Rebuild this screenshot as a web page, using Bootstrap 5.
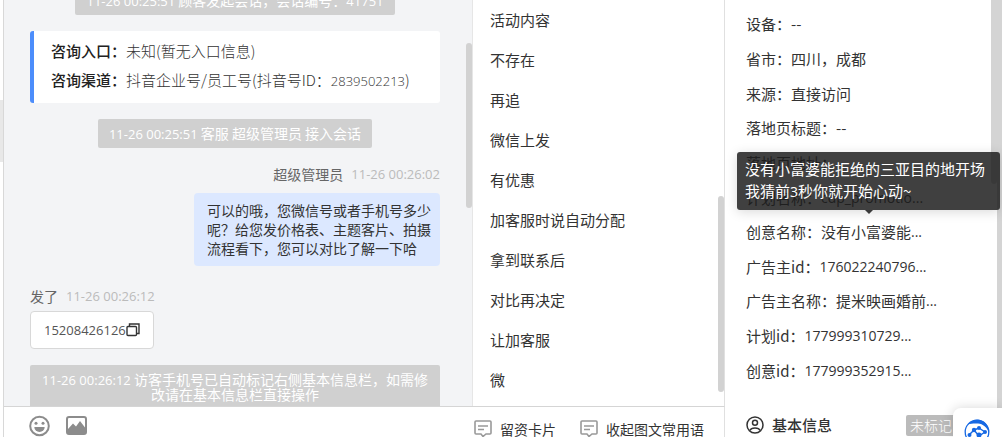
<!DOCTYPE html>
<html lang="zh-CN">
<head>
<meta charset="utf-8">
<meta name="viewport" content="width=device-width, initial-scale=1">
<title>客服会话</title>
<link href="https://cdn.jsdelivr.net/npm/bootstrap@5.3.0/dist/css/bootstrap.min.css" rel="stylesheet">
<style>
body{font-family:"Noto Sans CJK SC",sans-serif;font-size:15px;line-height:22px;color:#333;background:#fff}
.num{font-family:"Open Sans","Noto Sans CJK SC",sans-serif;font-size:14px}
.num-sm{font-family:"Open Sans","Noto Sans CJK SC",sans-serif;font-size:13px}
.edge{width:4px;border-right:1px solid #d8d8d8;padding-top:100px}
.edge-mark{height:62px;background:#e8e8e8}
.chat{background:#f3f4f6;padding:0 32px 0 26px;min-width:0}
.thumb{position:absolute;width:6px;border-radius:3px;background:#d2d2d2}
.chat .thumb{right:0;top:43px;height:165px}
.phrases .thumb{right:0;top:196px;height:196px}
.notice{background:#d0d0d0;color:#fff;font-size:14px;line-height:15px;padding:7px 11px;border-radius:2px;text-align:center}
.notice .num-sm{line-height:1}
.notice-first{margin-top:-14px}
.entry{background:#fff;border-left:4px solid #4c8dfb;border-radius:3px;padding:5px 17px;height:72px;line-height:29px;font-weight:300;color:#333}
.entry dt{font-weight:500;color:#222}
.who{font-size:14px;line-height:21px;color:#666}
.who time{color:#bbb}
.bubble{font-size:14px;line-height:19px;background:#dce8ff;border-radius:4px;padding:8px 9px 8px 13px;width:246px;color:#333}
.phone{height:38px;background:#fff;border:1px solid #d8d8d8;border-radius:4px;padding:0 13px;color:#555}
.plain{background:none;border:0;padding:0;color:inherit;line-height:20px}
.phrases{width:253px;border-left:1px solid #e6e6e6;border-right:1px solid #e0e0e0}
.phrase{height:40px;padding:0 0 0 17px;text-align:left}
.tools{height:31px;border-top:1px solid #d5d5d5;border-right:1px solid #e0e0e0;font-size:14px;padding-left:25px}
.tool-links{width:250px;padding-top:13px}
.info{width:277px;padding:7px 0 0 21px}
.info-bar{height:49px;padding-bottom:1px}
.bar-outer{position:absolute;right:0;top:0;bottom:0;width:5px;background:#d4d4d4}
.bar-inner{position:absolute;right:5px;top:0;width:6px;height:184px;border-radius:0 0 3px 3px;background:#d4d4d4}
.tip{position:absolute;right:2px;top:152px;width:263px;padding:6px 8px 7px;background:rgba(28,28,28,.84);color:#fff;border-radius:3px;box-shadow:0 2px 12px rgba(0,0,0,.15)}
.tip::after{content:"";position:absolute;left:128px;top:100%;border:4px solid transparent;border-top-color:#3a3a3a;border-bottom:0}
.tag{background:#bbb;color:#fff;font-size:14px;line-height:21px;padding:0 4px;border-radius:2px;font-weight:300;margin-right:46px}
.helper{position:absolute;right:0;bottom:0;width:49px;height:29px;background:#fff;border:0;border-radius:8px 0 0 0;box-shadow:0 0 12px rgba(0,0,0,.16);padding:11px 0 0 11px;overflow:hidden;text-align:left}
svg{display:block;flex:none}
</style>
</head>
<body class="vh-100 overflow-hidden d-flex">
<div class="edge flex-shrink-0"><div class="edge-mark"></div></div>
<main class="flex-fill d-flex flex-column overflow-hidden">
  <div class="d-flex flex-fill overflow-hidden">
    <section class="chat flex-fill position-relative overflow-hidden d-flex flex-column">
      <div class="notice notice-first align-self-center flex-shrink-0"><span class="num-sm">11-26 00:25:51</span> 顾客发起会话，会话编号：<span class="num-sm">41751</span></div>
      <dl class="entry mt-3 mb-3 flex-shrink-0">
        <div class="d-flex"><dt>咨询入口：</dt><dd class="m-0">未知(暂无入口信息)</dd></div>
        <div class="d-flex"><dt>咨询渠道：</dt><dd class="m-0 text-nowrap">抖音企业号/员工号(抖音号ID：<span class="num-sm">2839502213</span>)</dd></div>
      </dl>
      <div class="notice align-self-center flex-shrink-0"><span class="num-sm">11-26 00:25:51</span> 客服 超级管理员 接入会话</div>
      <div class="who d-flex justify-content-end gap-2 mt-3"><span>超级管理员</span><time class="num-sm">11-26 00:26:02</time></div>
      <div class="bubble align-self-end mt-2 flex-shrink-0">可以的哦，您微信号或者手机号多少呢？给您发价格表、主题客片、拍摄流程看下，您可以对比了解一下哈</div>
      <div class="who d-flex gap-2 mt-3 pt-1"><span>发了</span><time class="num-sm">11-26 00:26:12</time></div>
      <div class="phone num-sm d-flex align-items-center align-self-start mt-1 flex-shrink-0">15208426126
        <button class="plain" type="button" aria-label="复制"><svg width="14" height="14" viewBox="0 0 14 14" fill="none" stroke="#333" stroke-width="1.4"><rect x="1" y="3.5" width="9.5" height="9" rx="1"/><path d="M3.5 3V1H13v9.5h-2"/></svg></button>
      </div>
      <div class="notice mt-3 pb-3 flex-shrink-0"><span class="num-sm">11-26 00:26:12</span> 访客手机号已自动标记右侧基本信息栏，如需修改请在基本信息栏直接操作</div>
      <div class="thumb"></div>
    </section>
    <section class="phrases flex-shrink-0 position-relative d-flex flex-column overflow-hidden">
      <button class="plain phrase" type="button">活动内容</button>
      <button class="plain phrase" type="button">不存在</button>
      <button class="plain phrase" type="button">再追</button>
      <button class="plain phrase" type="button">微信上发</button>
      <button class="plain phrase" type="button">有优惠</button>
      <button class="plain phrase" type="button">加客服时说自动分配</button>
      <button class="plain phrase" type="button">拿到联系后</button>
      <button class="plain phrase" type="button">对比再决定</button>
      <button class="plain phrase" type="button">让加客服</button>
      <button class="plain phrase" type="button">微</button>
      <div class="thumb"></div>
    </section>
  </div>
  <footer class="tools flex-shrink-0 d-flex justify-content-between">
    <div class="d-flex gap-3 pt-2">
      <button class="plain" type="button" aria-label="表情"><svg width="21" height="22" viewBox="0 0 21 22"><circle cx="10.5" cy="11" r="9.3" fill="none" stroke="#8c8c8c" stroke-width="2"/><circle cx="7" cy="8.3" r="1.5" fill="#8c8c8c"/><circle cx="14" cy="8.3" r="1.5" fill="#8c8c8c"/><path d="M5.3 12h10.4a5.2 5 0 0 1-10.4 0z" fill="#8c8c8c"/></svg></button>
      <button class="plain" type="button" aria-label="图片"><svg width="21" height="22" viewBox="0 0 21 22"><rect x="1" y="2" width="19" height="17" rx="2" fill="none" stroke="#8c8c8c" stroke-width="2"/><path d="M2 14l5-5.5 3 3L14 6l5 6.500V19H2z" fill="#8c8c8c"/></svg></button>
    </div>
    <div class="tool-links d-flex gap-4">
      <button class="plain d-flex align-items-center gap-2" type="button"><svg width="18" height="18" viewBox="0 0 18 18" fill="none" stroke="#999" stroke-width="1.600"><path d="M2 1h14a1 1 0 0 1 1 1v11a1 1 0 0 1-1 1h-4l-3 2.500-2-2.500H2a1 1 0 0 1-1-1V2a1 1 0 0 1 1-1zM4 6h10M4 9.500h6"/></svg>留资卡片</button>
      <button class="plain d-flex align-items-center gap-2" type="button"><svg width="18" height="18" viewBox="0 0 18 18" fill="none" stroke="#999" stroke-width="1.600"><path d="M2 1h14a1 1 0 0 1 1 1v11a1 1 0 0 1-1 1h-4l-3 2.500-2-2.500H2a1 1 0 0 1-1-1V2a1 1 0 0 1 1-1zM4 6h10M4 9.500h6"/></svg>收起图文常用语</button>
    </div>
  </footer>
</main>
<aside class="info flex-shrink-0 position-relative d-flex flex-column">
  <div class="flex-fill d-flex flex-column">
    <div class="flex-fill d-flex align-items-center">设备：--</div>
    <div class="flex-fill d-flex align-items-center">省市：四川，成都</div>
    <div class="flex-fill d-flex align-items-center">来源：直接访问</div>
    <div class="flex-fill d-flex align-items-center">落地页标题：--</div>
    <div class="flex-fill d-flex align-items-center">落地页地址：</div>
    <div class="flex-fill d-flex align-items-center">计划名称：<span class="num">cdp_promotio...</span></div>
    <div class="flex-fill d-flex align-items-center">创意名称：没有小富婆能<span class="num">...</span></div>
    <div class="flex-fill d-flex align-items-center">广告主id：<span class="num">176022240796...</span></div>
    <div class="flex-fill d-flex align-items-center">广告主名称：提米映画婚前<span class="num">...</span></div>
    <div class="flex-fill d-flex align-items-center">计划id：<span class="num">177999310729...</span></div>
    <div class="flex-fill d-flex align-items-center">创意id：<span class="num">177999352915...</span></div>
  </div>
  <div class="info-bar d-flex align-items-end">
    <svg width="18" height="21" viewBox="0 0 18 21" fill="none" stroke="#333" stroke-width="1.500"><circle cx="9" cy="10" r="8"/><circle cx="9" cy="7.700" r="2.500"/><path d="M3.800 15.500c1.500-3.300 8.900-3.300 10.400 0"/></svg>
    <span class="fw-medium ms-2">基本信息</span>
    <span class="tag ms-auto">未标记</span>
  </div>
  <div class="bar-outer"></div>
  <div class="bar-inner"></div>
  <div class="tip" role="tooltip">没有小富婆能拒绝的三亚目的地开场<br>我猜前<span class="num">3</span>秒你就开始心动~</div>
  <button class="helper" type="button" aria-label="助手"><svg width="26" height="26" viewBox="0 0 26 26"><circle cx="13" cy="13" r="11.800" fill="#fff" stroke="#1668e3" stroke-width="1.300"/><path d="M4 5.500C9-1.500 20-1 24 8c.8 2 1.200 4 1 6-2-6-6-9-11-9.500-4-.3-7 0-10 1z" fill="#1668e3"/><path d="M5 16l5-5 5 6 6-4M10 11l5-2 6 4" fill="none" stroke="#1668e3" stroke-width="1.500"/><g fill="#1668e3"><circle cx="5.500" cy="16" r="2"/><circle cx="10" cy="11" r="2.200"/><circle cx="15" cy="9" r="2"/><circle cx="15" cy="16" r="2.500"/><circle cx="21" cy="13" r="2"/></g></svg></button>
</aside>
<script src="https://cdn.jsdelivr.net/npm/bootstrap@5.3.0/dist/js/bootstrap.bundle.min.js"></script>
</body>
</html>
